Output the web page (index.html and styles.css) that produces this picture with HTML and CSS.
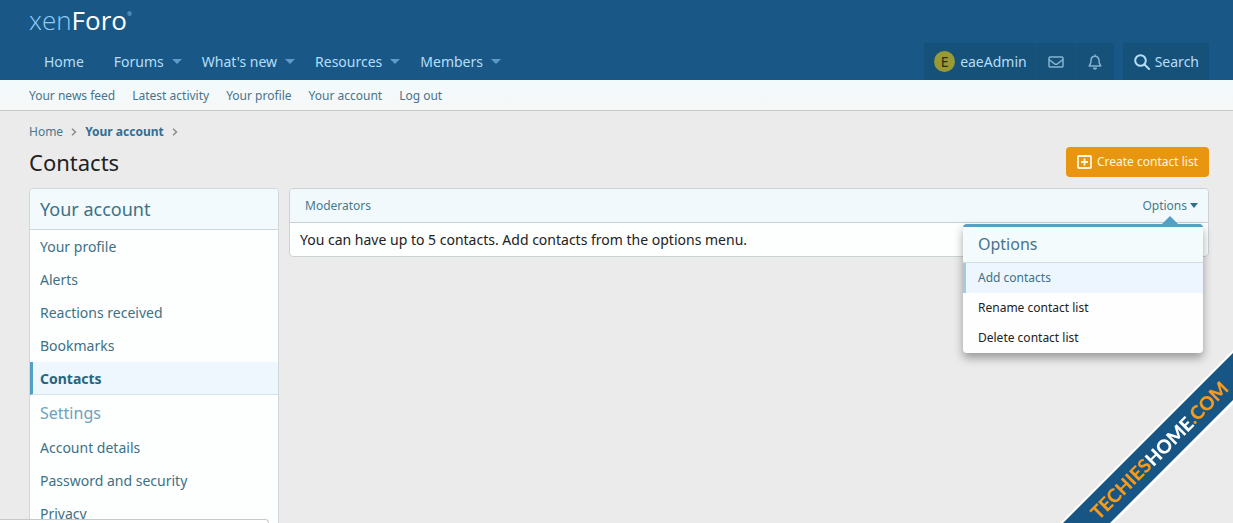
FILE: index.html
```html
<!DOCTYPE html>
<html lang="en">
<head>
<meta charset="utf-8">
<title>Contacts | XenForo</title>
<meta name="viewport" content="width=device-width, initial-scale=1">
<link rel="stylesheet" href="styles.css">
</head>
<body>
<header class="header">
  <a class="logo" href="#"><span class="logo-xen">xen</span>Foro<sup class="logo-mark">®</sup></a>
  <nav class="nav">
    <ul class="nav-list">
      <li><a href="#">Home</a></li>
      <li><a href="#">Forums</a><span class="caret"></span></li>
      <li><a href="#">What's new</a><span class="caret"></span></li>
      <li><a href="#">Resources</a><span class="caret"></span></li>
      <li><a href="#">Members</a><span class="caret"></span></li>
    </ul>
    <div class="nav-tools">
      <div class="tool-group">
        <a class="tool tool-user" href="#"><span class="avatar">E</span>eaeAdmin</a>
        <a class="tool tool-mail" href="#" aria-label="Direct messages">
          <svg width="16" height="12" viewBox="0 0 16 12" fill="none" stroke="currentColor" stroke-width="1.5" stroke-linejoin="round"><rect x="1" y="1" width="14" height="10" rx="1"/><path d="M1 3.5L6.6 7.8Q8 8.7 9.4 7.8L15 3.5"/></svg>
        </a>
        <a class="tool tool-bell" href="#" aria-label="Alerts">
          <svg width="14" height="16" viewBox="0 0 14 16" fill="none" stroke="currentColor" stroke-width="1.5" stroke-linejoin="round" stroke-linecap="round"><path d="M7 2.2V1M1.2 12H12.8C11.7 10.8 11 10 11 6.6C11 4 9.4 2.3 7 2.3S3 4 3 6.6C3 10 2.3 10.8 1.2 12Z"/><path d="M5.7 14.2Q7 15.5 8.3 14.2Z" fill="currentColor"/></svg>
        </a>
      </div>
      <a class="tool tool-search" href="#">
        <svg width="16" height="16" viewBox="0 0 16 16" fill="none" stroke="currentColor" stroke-width="2" stroke-linecap="round"><circle cx="6.5" cy="6.5" r="5.3"/><path d="M10.5 10.5L15 15"/></svg>Search</a>
    </div>
  </nav>
</header>
<nav class="subnav">
  <a href="#">Your news feed</a>
  <a href="#">Latest activity</a>
  <a href="#">Your profile</a>
  <a href="#">Your account</a>
  <a href="#">Log out</a>
</nav>
<main class="page">
  <nav class="crumbs">
    <a href="#">Home</a>
    <svg class="chevron" width="6" height="8" viewBox="0 0 6 8"><path d="M1 .8L4.5 4L1 7.2"/></svg>
    <a class="crumb-current" href="#">Your account</a>
    <svg class="chevron" width="6" height="8" viewBox="0 0 6 8"><path d="M1 .8L4.5 4L1 7.2"/></svg>
  </nav>
  <div class="title-row">
    <h1>Contacts</h1>
    <button class="cta" type="button">
      <svg width="15" height="14" viewBox="0 0 15 14" fill="none" stroke="currentColor" stroke-width="1.8"><rect x="1" y="1" width="13" height="12" rx="1"/><path d="M7.5 3.5V10.5M4 7H11"/></svg>Create contact list</button>
  </div>
  <div class="columns">
    <aside class="sidebar">
      <h2>Your account</h2>
      <a href="#">Your profile</a>
      <a href="#">Alerts</a>
      <a href="#">Reactions received</a>
      <a href="#">Bookmarks</a>
      <a class="selected" href="#">Contacts</a>
      <h3>Settings</h3>
      <a href="#">Account details</a>
      <a href="#">Password and security</a>
      <a href="#">Privacy</a>
    </aside>
    <section class="panel">
      <div class="panel-head">
        <h2>Moderators</h2>
        <div class="options">
          <button class="options-toggle" type="button">Options<span class="options-caret"></span></button>
          <div class="menu">
            <h4>Options</h4>
            <a class="active" href="#">Add contacts</a>
            <a href="#">Rename contact list</a>
            <a href="#">Delete contact list</a>
          </div>
        </div>
      </div>
      <p class="panel-body">You can have up to 5 contacts. Add contacts from the options menu.</p>
    </section>
  </div>
</main>
<div class="status"></div>
<svg class="ribbon" width="180" height="180" viewBox="0 0 180 180">
  <path class="ribbon-edge" d="M6 181L181 6V60L60 181Z"/>
  <path class="ribbon-band" d="M9 181L181 9V56L56 181Z"/>
  <text class="ribbon-text" x="106" y="107" transform="rotate(-45 106 107)" text-anchor="middle" dominant-baseline="central">TECHIES<tspan class="ribbon-white">HOME</tspan>.COM</text>
</svg>
</body>
</html>
```
FILE: styles.css
```css
* { box-sizing: border-box; }
body {
  margin: 0;
  height: 100vh;
  overflow: hidden;
  background: #ebebec;
  color: #222;
  font-family: "Noto Sans", "Open Sans", sans-serif;
  font-size: 14px;
  line-height: 20px;
}
a { color: inherit; text-decoration: none; }
h1, h2, h3, h4, p, ul { margin: 0; padding: 0; font-weight: 400; }
button { font: inherit; cursor: pointer; border: 0; }

.header {
  background: #195886;
  height: 80px;
  padding: 0 24px 0 29px;
  display: flex;
  flex-direction: column;
  justify-content: space-between;
  color: #b5defa;
}
.logo {
  color: #fff;
  font-family: "Open Sans", sans-serif;
  font-weight: 400;
  font-size: 26px;
  line-height: 40px;
  display: flex;
}
.logo-xen { color: #8fcbf5; font-weight: 300; }
.logo-mark { font-size: 6px; line-height: 28px; color: #8fcbf5; }
.nav { display: flex; justify-content: space-between; }
.nav-list { display: flex; list-style: none; padding-left: 15px; gap: 20px; line-height: 37px; }
.nav-list li { display: flex; align-items: center; gap: 8px; }
.nav-list li:first-child { margin-right: 10px; }
.caret { border: 5px solid transparent; border-top-color: #5b9ccb; border-bottom: 0; }
.nav-tools { display: flex; gap: 9px; line-height: 37px; }
.tool-group { display: flex; background: #165179; }
.tool { display: flex; align-items: center; justify-content: center; }
.tool + .tool { border-left: 1px solid #18567d; }
.tool-user { padding: 0 9px 0 10px; gap: 5px; }
.avatar {
  width: 21px;
  height: 21px;
  border-radius: 50%;
  background: #999935;
  color: #2b2b0c;
  line-height: 21px;
  text-align: center;
}
.tool-mail, .tool-bell { width: 39px; color: #84b4d0; }
.tool-search { background: #165179; padding: 0 10px 0 11px; gap: 5px; }

.subnav {
  display: flex;
  gap: 17px;
  padding: 1px 29px 0;
  background: linear-gradient(#f2fbfd, #f7f7f7);
  border-bottom: 1px solid #c8c8c8;
  color: #47738e;
  font-size: 12px;
  line-height: 29px;
}
.page { padding: 12px 24px 0 29px; }
.crumbs { display: flex; align-items: center; gap: 8px; font-size: 12px; line-height: 18px; color: #47798c; }
.crumb-current { font-weight: 700; color: #2f6f96; }
.chevron { fill: none; stroke: #85888a; stroke-width: 1.4; }
.title-row { display: flex; justify-content: space-between; align-items: center; padding: 6px 0 11px; }
h1 { font-size: 22px; line-height: 30px; }
.cta {
  display: flex;
  align-items: center;
  gap: 5px;
  height: 30px;
  padding: 0 11px;
  border-radius: 4px;
  background: #e8950f;
  color: #fff6dc;
  font-size: 12px;
}
.columns { display: flex; align-items: flex-start; gap: 10px; }
.sidebar {
  flex: 0 0 250px;
  background: #fdfefe;
  border: 1px solid #cfd8dc;
  border-radius: 4px 4px 0 0;
  color: #3d7185;
}
.sidebar h2 {
  background: #f3fafd;
  border-bottom: 1px solid #cfd8dc;
  border-radius: 4px 4px 0 0;
  padding: 0 10px;
  font-size: 18px;
  line-height: 40px;
}
.sidebar h3 { padding: 0 10px; font-size: 16px; line-height: 36px; color: #6da1bd; }
.sidebar a { display: block; padding: 0 10px; line-height: 33px; }
.sidebar .selected {
  padding-left: 7px;
  height: 33px;
  border-left: 3px solid #539fc6;
  border-bottom: 1px solid #d5e3ea;
  background: #eef7fd;
  color: #27657f;
  font-weight: 700;
}
.panel { flex: 1; background: #fdfefe; border: 1px solid #cbd2d5; border-radius: 4px; }
.panel-head {
  display: flex;
  justify-content: space-between;
  padding: 0 10px 0 15px;
  border-bottom: 1px solid #c5d0d4;
  border-radius: 4px 4px 0 0;
  background: #f1f9fd;
  color: #47798c;
  font-size: 12px;
  line-height: 33px;
}
.panel-head h2 { font-size: 12px; }
.panel-body { padding: 0 10px; line-height: 33px; }
.options { position: relative; }
.options-toggle { display: flex; align-items: center; gap: 3px; padding: 0; background: none; color: inherit; height: 33px; }
.options-caret { border: 4px solid transparent; border-top: 5px solid #2f6f8c; border-bottom: 0; }
.menu {
  position: absolute;
  top: 35px;
  right: -5px;
  width: 240px;
  border-top: 3px solid #539fc6;
  border-radius: 4px;
  background: #fefefe;
  box-shadow: 0 5px 10px rgba(0, 0, 0, .35);
  color: #222;
  line-height: 30px;
}
.menu::before {
  content: "";
  position: absolute;
  top: -11px;
  right: 25px;
  border: 8px solid transparent;
  border-top: 0;
  border-bottom-color: #539fc6;
}
.menu h4 {
  padding: 0 15px;
  background: #f3fbfd;
  border-bottom: 1px solid #d0dce1;
  color: #47738e;
  font-size: 16px;
  line-height: 35px;
}
.menu a { display: block; padding: 0 15px; }
.menu .active { padding-left: 12px; border-left: 3px solid #a3cbe1; background: #edf5fe; color: #3d7185; }

.status {
  position: fixed;
  left: 0;
  bottom: 0;
  width: 269px;
  height: 4px;
  background: #fff;
  border: 1px solid #c6c8c9;
  border-width: 1px 1px 0 0;
  border-radius: 0 4px 0 0;
}
.ribbon { position: fixed; right: 0; bottom: 0; }
.ribbon-edge { fill: #fff; }
.ribbon-band { fill: #175684; }
.ribbon-text { font-family: Lato, sans-serif; font-weight: 900; font-size: 19px; fill: #f59a1b; }
.ribbon-white { fill: #fff; }
```
